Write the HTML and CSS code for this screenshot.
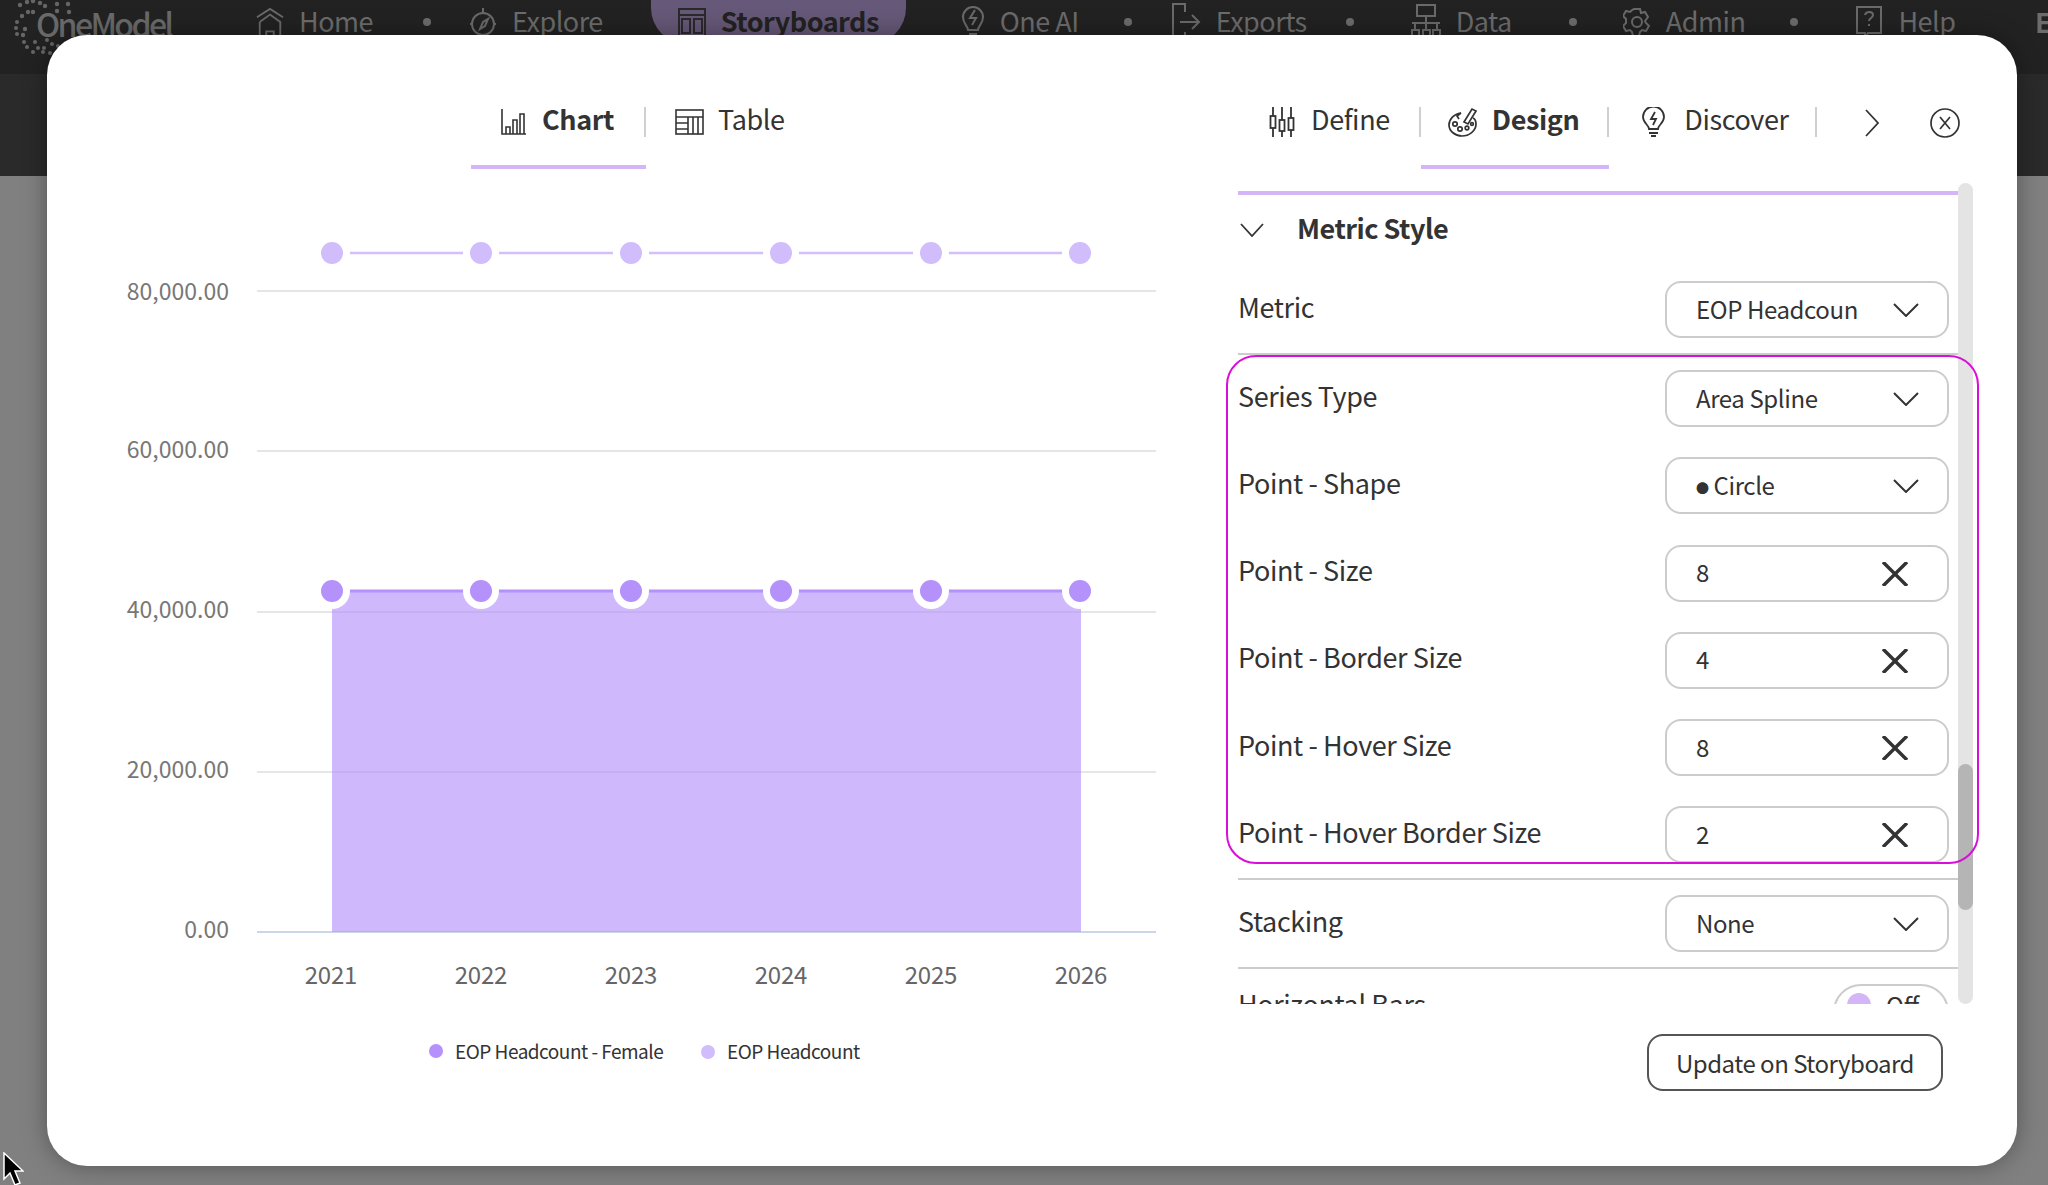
FILE: index.html
```html
<!DOCTYPE html>
<html lang="en">
<head>
    <meta charset="UTF-8">
    <meta name="viewport" content="width=device-width, initial-scale=1.0">
    <title>OneModel - Metric Style</title>
    <link rel="stylesheet" href="styles.css">
</head>
<body>
    <header class="topbar">
        <svg class="logo-dots" width="80" height="60" viewBox="0 0 80 60">
            <g fill="#666">
                <circle cx="20" cy="5" r="2.2"/><circle cx="27" cy="2" r="2.2"/><circle cx="33" cy="1" r="2.2"/><circle cx="40" cy="3" r="2.2"/><circle cx="45" cy="6" r="2.2"/>
                <circle cx="57" cy="4" r="2.2"/><circle cx="68" cy="4" r="2.2"/><circle cx="57" cy="11" r="2.2"/><circle cx="69" cy="12" r="2.2"/>
                <circle cx="22" cy="16" r="2.2"/><circle cx="28" cy="12" r="2.2"/><circle cx="33" cy="12" r="2.2"/>
                <circle cx="17" cy="22" r="2"/><circle cx="16" cy="28" r="2"/><circle cx="17" cy="34" r="2"/><circle cx="25" cy="29" r="2.2"/><circle cx="23" cy="35" r="2.2"/>
                <circle cx="24" cy="42" r="2"/><circle cx="27" cy="47" r="2"/><circle cx="33" cy="52" r="2"/><circle cx="38" cy="48" r="2"/><circle cx="35" cy="42" r="2"/>
                <circle cx="43" cy="52" r="2"/><circle cx="50" cy="53" r="2"/><circle cx="47" cy="40" r="2"/><circle cx="52" cy="44" r="2"/><circle cx="58" cy="46" r="2"/><circle cx="44" cy="48" r="2"/>
            </g>
        </svg>
        <span class="logo-text">OneModel</span>
        <nav class="main-nav">
            <a class="nav-item" href="#">
                <svg width="28" height="44" viewBox="0 0 30 44" fill="none" stroke="#6a6a6a" stroke-width="2"><path d="M1 17 15 8l14 9M4 22l11-8 11 8v22M4 22v22M11 44V32h8v12"/></svg>
                Home
            </a>
            <span class="nav-dot dot-home"></span>
            <a class="nav-item nav-explore" href="#">
                <svg width="28" height="36" viewBox="0 0 28 36" fill="none" stroke="#6a6a6a" stroke-width="2"><circle cx="14" cy="20" r="11"/><path d="M14 4v5M14 31v5M1 20h2M25 20h2M19 15l-3 7-5 3 3-7z"/></svg>
                Explore
            </a>
            <a class="nav-item nav-active" href="#">
                <svg width="28" height="30" viewBox="0 0 28 30" fill="none" stroke="#2a2a2a" stroke-width="2"><rect x="1" y="2" width="26" height="27"/><path d="M1 8h26M4 12h8v14H4zM16 12h8v14h-8z"/></svg>
                Storyboards
            </a>
            <a class="nav-item nav-oneai" href="#">
                <svg width="24" height="38" viewBox="0 0 24 38" fill="none" stroke="#6a6a6a" stroke-width="2"><path d="M7 27c0-4-5-6-5-13a10 10 0 0 1 20 0c0 7-5 9-5 13zM8 31h8"/><path d="M14 7l-5 8h6l-4 7"/></svg>
                One AI
            </a>
            <span class="nav-dot"></span>
            <a class="nav-item nav-exports" href="#">
                <svg width="30" height="40" viewBox="0 0 30 40" fill="none" stroke="#6a6a6a" stroke-width="2"><path d="M14 10V2H2v38h12V30M9 20h19M21 13l7 7-7 7"/></svg>
                Exports
            </a>
            <span class="nav-dot dot-exports"></span>
            <a class="nav-item nav-data" href="#">
                <svg width="30" height="38" viewBox="0 0 30 38" fill="none" stroke="#6a6a6a" stroke-width="2"><rect x="6" y="2" width="18" height="11"/><path d="M1 20h28M15 13v7M4 20v6M15 20v6M26 20v6"/><rect x="1" y="27" width="7" height="9"/><rect x="12" y="27" width="7" height="9"/><rect x="22" y="27" width="7" height="9"/></svg>
                Data
            </a>
            <span class="nav-dot dot-data"></span>
            <a class="nav-item nav-admin" href="#">
                <svg width="28" height="30" viewBox="0 0 28 30" fill="none" stroke="#6a6a6a" stroke-width="2"><path d="M11 2h6l1 4 4-1 3 5-3 4 1 2 3 3-3 5-4-1-2 2-1 4h-6l-1-4-2-2-4 1-3-5 3-3v-4l-3-3 3-5 4 1 2-2z"/><circle cx="14" cy="15" r="5"/></svg>
                Admin
            </a>
            <span class="nav-dot"></span>
            <a class="nav-item nav-help" href="#">
                <svg width="28" height="38" viewBox="0 0 28 38" fill="none" stroke="#6a6a6a" stroke-width="2"><path d="M2 4h24v26H13l-3 5v-5H2zM10 12c1-4 8-4 8 0 0 3-4 3-4 6M14 21v2"/></svg>
                Help
            </a>
        </nav>
        <span class="nav-clipped">E</span>
    </header>
    <div class="subbar"></div>

    <div class="modal">
        <section class="chart-pane">
            <div class="tabs tabs-left">
                <div class="tab tab-active">
                    <div class="tab-inner">
                        <svg width="25" height="26" viewBox="0 0 25 26" fill="none" stroke="#333" stroke-width="1.6"><path d="M1 0v25h24M5 25v-7h4v7M12 25V11h4v14M19 25V5h4v20"/></svg>
                        <b>Chart</b>
                    </div>
                </div>
                <div class="tab">
                    <div class="tab-inner tab-last">
                        <svg width="29" height="26" viewBox="0 0 29 26" fill="none" stroke="#333" stroke-width="1.6"><rect x="1" y="1" width="27" height="24"/><path d="M1 8h27M1 14h12M1 20h12M13 8v17M18 8v17M23 8v17"/></svg>
                        Table
                    </div>
                </div>
            </div>
            <svg class="chart" width="1191" height="960" viewBox="47 168 1191 960">
                <g stroke="#e6e6e6" stroke-width="2">
                    <line x1="257" y1="291" x2="1156" y2="291"/>
                    <line x1="257" y1="451" x2="1156" y2="451"/>
                    <line x1="257" y1="612" x2="1156" y2="612"/>
                    <line x1="257" y1="772" x2="1156" y2="772"/>
                </g>
                <line x1="257" y1="932" x2="1156" y2="932" stroke="#ccd6eb" stroke-width="2"/>
                <g class="axis-y">
                    <text x="229" y="300">80,000.00</text>
                    <text x="229" y="458">60,000.00</text>
                    <text x="229" y="618">40,000.00</text>
                    <text x="229" y="778">20,000.00</text>
                    <text x="229" y="938">0.00</text>
                </g>
                <g class="axis-x">
                    <text x="331" y="984">2021</text>
                    <text x="481" y="984">2022</text>
                    <text x="631" y="984">2023</text>
                    <text x="781" y="984">2024</text>
                    <text x="931" y="984">2025</text>
                    <text x="1081" y="984">2026</text>
                </g>

                <line x1="332" y1="253" x2="1080" y2="253" stroke="#d4bffc" stroke-width="2.500"/>
                <g fill="#fff">
                    <circle cx="332" cy="253" r="18"/><circle cx="481" cy="253" r="18"/><circle cx="631" cy="253" r="18"/>
                    <circle cx="781" cy="253" r="18"/><circle cx="931" cy="253" r="18"/><circle cx="1080" cy="253" r="18"/>
                </g>
                <g fill="#d1bcfc">
                    <circle cx="332" cy="253" r="11"/><circle cx="481" cy="253" r="11"/><circle cx="631" cy="253" r="11"/>
                    <circle cx="781" cy="253" r="11"/><circle cx="931" cy="253" r="11"/><circle cx="1080" cy="253" r="11"/>
                </g>

                <rect x="332" y="590" width="749" height="342" fill="#b491fb" opacity="0.64"/>
                <line x1="332" y1="591" x2="1081" y2="591" stroke="#b491fb" stroke-width="3"/>
                <g fill="#fff">
                    <circle cx="332" cy="591" r="18"/><circle cx="481" cy="591" r="18"/><circle cx="631" cy="591" r="18"/>
                    <circle cx="781" cy="591" r="18"/><circle cx="931" cy="591" r="18"/><circle cx="1080" cy="591" r="18"/>
                </g>
                <g fill="#b491fb">
                    <circle cx="332" cy="591" r="11"/><circle cx="481" cy="591" r="11"/><circle cx="631" cy="591" r="11"/>
                    <circle cx="781" cy="591" r="11"/><circle cx="931" cy="591" r="11"/><circle cx="1080" cy="591" r="11"/>
                </g>

                <circle cx="436" cy="1051" r="7" fill="#b491fb"/>
                <text class="legend" x="455" y="1059">EOP Headcount - Female</text>
                <circle cx="708" cy="1052" r="7" fill="#d1bcfc"/>
                <text class="legend" x="727" y="1059">EOP Headcount</text>
            </svg>
        </section>

        <section class="side-pane">
            <div class="tabs">
                <div class="tab">
                    <div class="tab-inner tab-define">
                        <svg width="26" height="30" viewBox="0 0 26 30" fill="none" stroke="#333" stroke-width="1.8"><path d="M4 0v9M4 21v9M13 0v13M13 24v6M22 0v11M22 23v7"/><rect x="1.5" y="9" width="5" height="12"/><rect x="10.5" y="13" width="5" height="11"/><rect x="19.5" y="11" width="5" height="12"/></svg>
                        Define
                    </div>
                </div>
                <div class="tab tab-active">
                    <div class="tab-inner tab-design">
                        <svg width="30" height="30" viewBox="0 0 30 30" fill="none" stroke="#333" stroke-width="1.7"><path d="M13 6C6 7 1 12 1 18c0 6 6 11 13 11s14-5 14-12c0-3-1-5-3-6M13 6l-4 3 2 3"/><path d="M16 15 24 2l4 2-8 13z"/><circle cx="7" cy="17" r="2.2"/><circle cx="12" cy="22" r="2.2"/><circle cx="19" cy="21" r="1.8"/><circle cx="24" cy="17" r="1.4"/></svg>
                        <b>Design</b>
                    </div>
                </div>
                <div class="tab">
                    <div class="tab-inner tab-discover">
                        <svg width="23" height="30" viewBox="0 0 23 30" fill="none" stroke="#333" stroke-width="1.8"><path d="M7 22c0-4-6-6-6-12a10.500 10.500 0 0 1 21 0c0 6-6 8-6 12zM7 26h9M9 29h5"/><path d="M13 5l-4 7h5l-3 6"/></svg>
                        Discover
                    </div>
                </div>
                <button class="tab-next" type="button" aria-label="Next">
                    <svg width="14" height="28" viewBox="0 0 14 28" fill="none" stroke="#333" stroke-width="1.8"><path d="M1 1l12 13L1 27"/></svg>
                </button>
                <button class="tab-close" type="button" aria-label="Close">
                    <svg width="30" height="30" viewBox="0 0 30 30" fill="none" stroke="#333" stroke-width="1.7"><circle cx="15" cy="15" r="14"/><path d="M10 9l10 12M20 9 10 21"/></svg>
                </button>
            </div>

            <div class="panel">
                <div class="panel-content">
                    <div class="section-head">
                        <svg width="24" height="14" viewBox="0 0 24 14" fill="none" stroke="#333" stroke-width="1.8"><path d="M1 1l11 12L23 1"/></svg>
                        <h2>Metric Style</h2>
                    </div>
                    <div class="group group-first">
                        <div class="row">
                            <label>Metric</label>
                            <div class="field"><span class="field-value field-clip">EOP Headcount</span><svg class="chev" width="26" height="14" viewBox="0 0 26 14" fill="none" stroke="#333" stroke-width="2"><path d="M1 1l12 12L25 1"/></svg></div>
                        </div>
                    </div>
                    <div class="group">
                        <div class="row">
                            <label>Series Type</label>
                            <div class="field"><span class="field-value">Area Spline</span><svg class="chev" width="26" height="14" viewBox="0 0 26 14" fill="none" stroke="#333" stroke-width="2"><path d="M1 1l12 12L25 1"/></svg></div>
                        </div>
                        <div class="row">
                            <label>Point - Shape</label>
                            <div class="field"><span class="field-value"><span class="shape-glyph">&#9679;</span> Circle</span><svg class="chev" width="26" height="14" viewBox="0 0 26 14" fill="none" stroke="#333" stroke-width="2"><path d="M1 1l12 12L25 1"/></svg></div>
                        </div>
                        <div class="row">
                            <label>Point - Size</label>
                            <div class="field"><span class="field-value">8</span><svg class="clear" width="26" height="24" viewBox="0 0 26 24" fill="none" stroke="#333" stroke-width="3.400"><path d="M1 0l24 24M25 0 1 24"/></svg></div>
                        </div>
                        <div class="row">
                            <label>Point - Border Size</label>
                            <div class="field"><span class="field-value">4</span><svg class="clear" width="26" height="24" viewBox="0 0 26 24" fill="none" stroke="#333" stroke-width="3.400"><path d="M1 0l24 24M25 0 1 24"/></svg></div>
                        </div>
                        <div class="row">
                            <label>Point - Hover Size</label>
                            <div class="field"><span class="field-value">8</span><svg class="clear" width="26" height="24" viewBox="0 0 26 24" fill="none" stroke="#333" stroke-width="3.400"><path d="M1 0l24 24M25 0 1 24"/></svg></div>
                        </div>
                        <div class="row">
                            <label>Point - Hover Border Size</label>
                            <div class="field"><span class="field-value">2</span><svg class="clear" width="26" height="24" viewBox="0 0 26 24" fill="none" stroke="#333" stroke-width="3.400"><path d="M1 0l24 24M25 0 1 24"/></svg></div>
                        </div>
                    </div>
                    <div class="group">
                        <div class="row">
                            <label>Stacking</label>
                            <div class="field"><span class="field-value">None</span><svg class="chev" width="26" height="14" viewBox="0 0 26 14" fill="none" stroke="#333" stroke-width="2"><path d="M1 1l12 12L25 1"/></svg></div>
                        </div>
                    </div>
                    <div class="group">
                        <div class="row row-toggle">
                            <label>Horizontal Bars</label>
                            <div class="toggle"><span class="toggle-dot"></span>Off</div>
                        </div>
                    </div>
                </div>
                <div class="scrollbar"><div class="scrollbar-thumb"></div></div>
                <div class="highlight"></div>
            </div>

            <div class="panel-footer">
                <button class="update-btn" type="button">Update on Storyboard</button>
            </div>
        </section>
    </div>

    <svg class="cursor" width="22" height="34" viewBox="0 0 22 34">
        <path d="M2 1v26l6-6 5 12 5-2-5-12h8z" fill="#000" stroke="#fff" stroke-width="1.500"/>
    </svg>
</body>
</html>
```

FILE: styles.css
```css
:root {
    --purple-line: #d4b5f7;
    --field-border: #cccccc;
    --text-color: #333;
    --nav-text: #6c6c6c;
}

* {
    margin: 0;
    padding: 0;
    box-sizing: border-box;
}

html,
body {
    height: 100%;
    overflow: hidden;
}

body {
    font-family: "Noto Sans CJK SC", "Noto Sans", sans-serif;
    background-color: #808080;
    color: var(--text-color);
    position: relative;
}

/* dimmed app behind the modal */
.topbar {
    height: 74px;
    background-color: #222;
    display: flex;
    align-items: flex-start;
    overflow: hidden;
    position: relative;
}

.logo-dots {
    position: absolute;
    left: 0;
    top: 0;
}

.logo-text {
    position: absolute;
    left: 36px;
    top: 0;
    font-size: 32px;
    line-height: 46px;
    font-weight: 500;
    color: #6a6a6a;
    letter-spacing: -2.600px;
}

.main-nav {
    display: flex;
    align-items: center;
    gap: 45px;
    margin-left: 256px;
    height: 44px;
}

.nav-item {
    display: flex;
    align-items: center;
    gap: 15px;
    color: var(--nav-text);
    text-decoration: none;
    font-size: 27px;
    letter-spacing: -0.5px;
    white-space: nowrap;
    height: 40px;
    margin-top: -4px;
}

.nav-item svg {
    margin-top: 4px;
}

.nav-active {
    font-weight: 700;
    color: #222;
    background-color: #665878;
    height: 70px;
    margin: -26px 0 0 3px;
    padding: 22px 27px 0;
    border-radius: 0 0 36px 36px;
}

/* the real bar isn't evenly spaced */
.dot-home {
    margin: 0 -7px 0 5px;
}

.nav-oneai {
    margin-left: 10px;
}

.nav-exports {
    margin-left: -6px;
}

.dot-exports {
    margin-left: -6px;
}

.nav-data {
    margin-left: 12px;
}

.dot-data {
    margin-left: 12px;
}

.nav-admin {
    margin-left: 1px;
}

.nav-help {
    margin-left: 12px;
}

.nav-dot {
    width: 8px;
    height: 8px;
    border-radius: 50%;
    background-color: var(--nav-text);
}

.nav-clipped {
    position: absolute;
    left: 2035px;
    top: 2px;
    font-size: 27px;
    font-weight: 700;
    color: var(--nav-text);
}

.subbar {
    height: 102px;
    background-color: #2a2a2a;
}

/* modal */
.modal {
    position: absolute;
    left: 47px;
    top: 35px;
    width: 1970px;
    height: 1131px;
    background-color: #fff;
    border-radius: 40px;
    box-shadow: 0 0 24px rgba(0, 0, 0, 0.35);
    display: flex;
}

.chart-pane {
    width: 1191px;
}

.side-pane {
    flex: 1;
    display: flex;
    flex-direction: column;
}

.tabs {
    display: flex;
    height: 133px;
}

.tabs-left {
    padding-left: 424px;
}

.tab {
    padding-top: 72px;
    height: 134px;
    border-bottom: 4px solid transparent;
}

.tab-active {
    border-bottom-color: var(--purple-line);
}

.tab-inner {
    display: flex;
    align-items: center;
    gap: 16px;
    height: 30px;
    padding: 0 30px 6px;
    font-size: 27px;
    letter-spacing: -0.4px;
    line-height: 24px;
    border-right: 2px solid #d0d0d0;
}

.tab-inner svg {
    flex-shrink: 0;
    margin-top: 6px;
}

.tab-inner b {
    font-weight: 700;
}

.tab-last {
    border-right: none;
    padding-left: 29px;
    gap: 14px;
}

.tab-define {
    padding-left: 31px;
    padding-right: 29px;
}

.tab-design {
    padding-left: 27px;
    padding-right: 28px;
    gap: 14px;
}

.tab-discover {
    padding-left: 33px;
    padding-right: 26px;
    gap: 19px;
}

.tab-next,
.tab-close {
    background: none;
    border: none;
    display: flex;
    align-items: center;
    height: 30px;
    margin-top: 73px;
}

.tab-next {
    margin-left: 48px;
}

.tab-close {
    margin-left: 51px;
}

.chart {
    display: block;
}

.chart text {
    font-family: "Noto Sans CJK SC", "Noto Sans", sans-serif;
}

.axis-y text {
    font-size: 23px;
    fill: #777;
    text-anchor: end;
}

.axis-x text {
    font-size: 24px;
    letter-spacing: -0.2px;
    fill: #666;
    text-anchor: middle;
}

.chart .legend {
    font-size: 19px;
    letter-spacing: -0.5px;
    fill: #333;
}

/* settings panel */
.panel {
    position: relative;
    display: flex;
    margin-top: 15px;
    height: 821px;
}

.panel-content {
    width: 720px;
    padding-top: 8px;
    overflow: hidden;
}

.section-head {
    display: flex;
    align-items: center;
    gap: 33px;
    height: 73px;
    padding-left: 2px;
    border-top: 4px solid var(--purple-line);
}

.section-head h2 {
    font-size: 27px;
    letter-spacing: -0.5px;
    font-weight: 700;
    margin-top: -4px;
}

.group {
    display: flex;
    flex-direction: column;
    gap: 30.3px;
    padding: 15px 0;
    border-bottom: 2px solid var(--field-border);
}

.group-first {
    padding-top: 17px;
}

.row {
    display: flex;
    align-items: center;
    justify-content: space-between;
    padding-right: 9px;
}

.row label {
    font-size: 27px;
    letter-spacing: -0.4px;
    line-height: 40px;
    margin-top: -6px;
}

.row-toggle label {
    margin-top: -18px;
}

.field {
    width: 284px;
    height: 57px;
    border: 2px solid var(--field-border);
    border-radius: 16px;
    padding-left: 29px;
    display: flex;
    align-items: center;
    position: relative;
    font-size: 24px;
    letter-spacing: -0.4px;
}

.field-value {
    white-space: nowrap;
    margin-top: -3px;
}

.shape-glyph {
    font-size: 13px;
    vertical-align: 2px;
}

.field-clip {
    width: 162px;
    overflow: hidden;
}

.chev {
    position: absolute;
    right: 28px;
    top: 20px;
}

.clear {
    position: absolute;
    right: 39px;
    top: 15px;
}

.toggle {
    width: 116px;
    height: 57px;
    border: 2px solid var(--field-border);
    border-radius: 28px;
    display: flex;
    align-items: flex-start;
    gap: 15px;
    padding: 7px 0 0 12px;
    font-size: 24px;
    line-height: 24px;
}

.toggle-dot {
    width: 24px;
    height: 24px;
    border-radius: 50%;
    background-color: var(--purple-line);
}

.scrollbar {
    width: 15px;
    background-color: #e4e4e4;
    border-radius: 8px;
    position: relative;
}

.scrollbar-thumb {
    position: absolute;
    left: 0;
    top: 581px;
    width: 15px;
    height: 146px;
    background-color: #b5b5b5;
    border-radius: 8px;
}

/* annotation drawn on top of the screenshot */
.highlight {
    position: absolute;
    left: -12px;
    top: 172px;
    width: 753px;
    height: 509px;
    border: 2px solid #d90fd9;
    border-radius: 30px;
    pointer-events: none;
}

.panel-footer {
    display: flex;
    justify-content: flex-end;
    padding: 30px 74px 0 0;
}

.update-btn {
    width: 296px;
    height: 57px;
    background: #fff;
    border: 2px solid #555;
    border-radius: 16px;
    font-family: inherit;
    font-size: 24px;
    letter-spacing: -0.5px;
    color: var(--text-color);
}

.cursor {
    position: absolute;
    left: 2px;
    top: 1152px;
}
```
